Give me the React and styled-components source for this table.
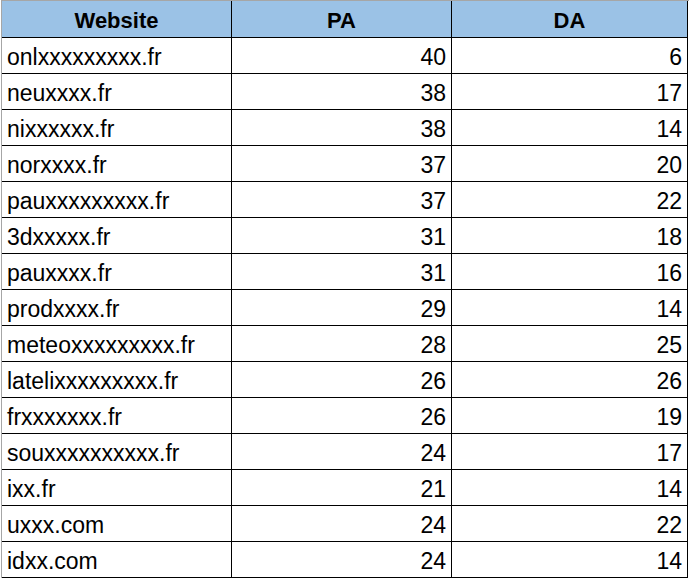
import React from "react";
import styled, { createGlobalStyle } from "styled-components";

const rows = [
  ["onlxxxxxxxxx.fr", 40, 6],
  ["neuxxxx.fr", 38, 17],
  ["nixxxxxx.fr", 38, 14],
  ["norxxxx.fr", 37, 20],
  ["pauxxxxxxxxx.fr", 37, 22],
  ["3dxxxxx.fr", 31, 18],
  ["pauxxxx.fr", 31, 16],
  ["prodxxxx.fr", 29, 14],
  ["meteoxxxxxxxxx.fr", 28, 25],
  ["latelixxxxxxxxx.fr", 26, 26],
  ["frxxxxxxx.fr", 26, 19],
  ["souxxxxxxxxxx.fr", 24, 17],
  ["ixx.fr", 21, 14],
  ["uxxx.com", 24, 22],
  ["idxx.com", 24, 14],
];

const GlobalStyle = createGlobalStyle`
  body {
    margin: 0;
    background: #fff;
    font-family: "Liberation Sans", Arial, sans-serif;
    color: #000;
  }
`;

export default function App() {
  return (
    <>
      <GlobalStyle />
      <Sheet>
        <HeadCell>Website</HeadCell>
        <HeadCell>PA</HeadCell>
        <HeadCell>DA</HeadCell>
        {rows.map(([site, pa, da]) => (
          <React.Fragment key={site}>
            <Cell>{site}</Cell>
            <Cell $right>{pa}</Cell>
            <Cell $right>{da}</Cell>
          </React.Fragment>
        ))}
      </Sheet>
    </>
  );
}

const Sheet = styled.div`
  display: grid;
  grid-template-columns: 230px 220px 236px;
  width: 687px;
  margin-left: 1px;
  border-top: 1px solid #a6a6a6;
  border-left: 1px solid #a6a6a6;
`;

const HeadCell = styled.div`
  box-sizing: border-box;
  height: 37px;
  background: #9bc2e6;
  border-right: 1px solid #000;
  border-bottom: 1px solid #000;
  display: flex;
  align-items: flex-end;
  justify-content: center;
  padding-bottom: 3px;
  font-size: 22px;
  font-weight: bold;
`;

const Cell = styled.div`
  box-sizing: border-box;
  height: 36px;
  border-right: 1px solid #000;
  border-bottom: 1px solid #000;
  display: flex;
  align-items: flex-end;
  justify-content: ${(p) => (p.$right ? "flex-end" : "flex-start")};
  padding: 0 5px 2px 5px;
  font-size: 23px;
`;
